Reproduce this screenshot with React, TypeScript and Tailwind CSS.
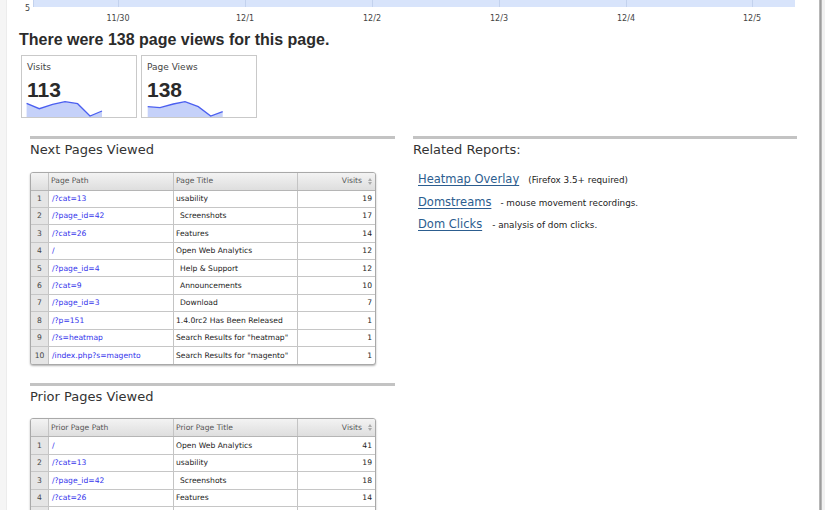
const nextRows = [
  ["/?cat=13", "usability", 19, false],
  ["/?page_id=42", "Screenshots", 17, true],
  ["/?cat=26", "Features", 14, false],
  ["/", "Open Web Analytics", 12, false],
  ["/?page_id=4", "Help & Support", 12, true],
  ["/?cat=9", "Announcements", 10, true],
  ["/?page_id=3", "Download", 7, true],
  ["/?p=151", "1.4.0rc2 Has Been Released", 1, false],
  ["/?s=heatmap", 'Search Results for "heatmap"', 1, false],
  ["/index.php?s=magento", 'Search Results for "magento"', 1, false],
] as const;

const priorRows = [
  ["/", "Open Web Analytics", 41, false],
  ["/?cat=13", "usability", 19, false],
  ["/?page_id=42", "Screenshots", 18, true],
  ["/?cat=26", "Features", 14, false],
  ["", "", "", false],
] as const;

const sans = { fontFamily: '"DejaVu Sans", sans-serif' };

function TopChart() {
  const ticks = [
    { x: 118, label: "11/30" },
    { x: 245, label: "12/1" },
    { x: 372, label: "12/2" },
    { x: 499, label: "12/3" },
    { x: 626, label: "12/4" },
    { x: 752, label: "12/5" },
  ];
  return (
    <svg width="812" height="24" viewBox="7 0 812 24" className="block">
      <rect x="33" y="0" width="762" height="7" fill="#d8e4fb" />
      <line x1="33.5" y1="0" x2="33.5" y2="7" stroke="#c3d2ee" />
      {ticks.map((t) => (
        <line key={t.label} x1={t.x + 0.5} y1="0" x2={t.x + 0.5} y2="7" stroke="#c3d2ee" />
      ))}
      <text x="25" y="10.5" fontSize="8" fill="#444" fontFamily="DejaVu Sans">
        5
      </text>
      {ticks.map((t) => (
        <text
          key={t.label}
          x={t.x}
          y="21"
          fontSize="8"
          fill="#444"
          textAnchor="middle"
          fontFamily="DejaVu Sans"
        >
          {t.label}
        </text>
      ))}
    </svg>
  );
}

function Sparkline({ pts }: { pts: number[][] }) {
  const line = pts.map((p, i) => `${i ? "L" : "M"}${p[0]},${p[1]}`).join(" ");
  const area = `M${pts[0][0]},16 ${pts.map((p) => `L${p[0]},${p[1]}`).join(" ")} L${pts[pts.length - 1][0]},16 Z`;
  return (
    <svg width="114" height="16" className="block overflow-visible">
      <path d={area} fill="#c5d1f9" />
      <path d={line} fill="none" stroke="#4b5ff0" strokeWidth="1.3" />
    </svg>
  );
}

function StatCard({ label, value, pts }: { label: string; value: string; pts: number[][] }) {
  return (
    <div className="w-[116px] border border-[#c9c9c9] pt-[6px] bg-white">
      <div className="pl-[5px] text-[9px] leading-[11px] text-[#444]" style={sans}>
        {label}
      </div>
      <div
        className="mt-[6px] pl-[5px] text-[21px] leading-[22px] font-bold text-[#2a2a2a]"
        style={{ fontFamily: '"Liberation Sans", Arial, sans-serif' }}
      >
        {value}
      </div>
      <Sparkline pts={pts} />
    </div>
  );
}

function SortIcon() {
  return (
    <svg width="4" height="7" className="ml-[6px]">
      <path d="M0,3 L2,0 L4,3 Z" fill="#aaa" />
      <path d="M0,4 L2,7 L4,4 Z" fill="#aaa" />
    </svg>
  );
}

function DataTable({
  pathLabel,
  titleLabel,
  rows,
}: {
  pathLabel: string;
  titleLabel: string;
  rows: readonly (readonly [string, string, number | string, boolean])[];
}) {
  return (
    <div
      className="w-[346px] rounded-[3px] border border-[#a9a9a9] bg-white shadow-[0_1px_2px_rgba(0,0,0,0.3)] overflow-hidden text-[7.6px]"
      style={sans}
    >
      <div className="flex h-[18px] border-b border-[#b5b5b5] bg-gradient-to-b from-[#f3f3f3] to-[#dedede] text-[#555]">
        <div className="w-[18px] border-r border-[#c4c4c4]" />
        <div className="w-[125px] border-r border-[#c4c4c4] pl-[2px] flex items-center">{pathLabel}</div>
        <div className="w-[124px] border-r border-[#c4c4c4] pl-[2px] flex items-center">{titleLabel}</div>
        <div className="flex-1 flex items-center justify-end pr-[3px]">
          Visits
          <SortIcon />
        </div>
      </div>
      {rows.map((r, i) => (
        <div
          key={i}
          className={`flex h-[17.4px] ${i < rows.length - 1 ? "border-b border-[#c6c6c6]" : ""}`}
        >
          <div className="w-[18px] border-r border-[#c4c4c4] bg-[#e5e5e5] text-[#444] flex items-center justify-center">
            {r[0] === "" ? "" : i + 1}
          </div>
          <div className="w-[125px] border-r border-[#c4c4c4] pl-[3px] flex items-center text-[#3434ec] whitespace-nowrap">
            {r[0]}
          </div>
          <div
            className={`w-[124px] border-r border-[#c4c4c4] flex items-center text-[#222] whitespace-nowrap ${
              r[3] ? "pl-[6px]" : "pl-[2px]"
            }`}
          >
            {r[1]}
          </div>
          <div className="flex-1 flex items-center justify-end pr-[3px] text-[#222]">{r[2]}</div>
        </div>
      ))}
    </div>
  );
}

function SectionTitle({ children }: { children: React.ReactNode }) {
  return (
    <>
      <div className="h-[3px] bg-[#c3c3c3]" />
      <div className="mt-[3px] text-[13px] leading-[16px] text-[#333]" style={sans}>
        {children}
      </div>
    </>
  );
}

function RelatedLink({ name, note, noteGap }: { name: string; note: string; noteGap: string }) {
  return (
    <div className="flex items-baseline h-[22.5px] pl-[5px]">
      <span className="text-[11.5px] leading-[22.5px] text-[#2c5d8f] underline underline-offset-2">{name}</span>
      <span className={`${noteGap} text-[8.8px] text-[#222]`}>{note}</span>
    </div>
  );
}

export default function App() {
  return (
    <div className="flex w-[825px] h-[510px] overflow-hidden bg-white">
      {/* left gutter */}
      <div className="w-[7px] shrink-0 bg-[#f5f5f5] border-r border-[#ececec]" />

      {/* page content */}
      <div className="w-[812px] shrink-0">
        <TopChart />

        <h1
          className="mt-[7px] pl-[12px] text-[16px] leading-[18px] font-bold text-[#2b2b2b]"
          style={{ fontFamily: '"Liberation Sans", Arial, sans-serif' }}
        >
          There were 138 page views for this page.
        </h1>

        <div className="mt-[6px] ml-[14px] flex gap-[4px]">
          <StatCard
            label="Visits"
            value="113"
            pts={[
              [4.6, 2.3],
              [17.3, 7.7],
              [30.6, 3.3],
              [43, 0.7],
              [55.6, 2.7],
              [68, 15],
              [80, 10],
            ]}
          />
          <StatCard
            label="Page Views"
            value="138"
            pts={[
              [5.7, 5.7],
              [18, 6.7],
              [31.3, 3],
              [43, 0.7],
              [56.3, 5.7],
              [68.7, 15],
              [80.7, 10.7],
            ]}
          />
        </div>

        <div className="mt-[18px] ml-[23px] flex gap-[18px]">
          {/* left column */}
          <div className="w-[365px]">
            <SectionTitle>Next Pages Viewed</SectionTitle>
            <div className="mt-[13.5px]">
              <DataTable pathLabel="Page Path" titleLabel="Page Title" rows={nextRows} />
            </div>

            <div className="mt-[17.5px]">
              <SectionTitle>Prior Pages Viewed</SectionTitle>
            </div>
            <div className="mt-[13.5px]">
              <DataTable pathLabel="Prior Page Path" titleLabel="Prior Page Title" rows={priorRows} />
            </div>
          </div>

          {/* right column */}
          <div className="w-[384px]" style={sans}>
            <SectionTitle>Related Reports:</SectionTitle>
            <div className="mt-[10px]">
              <RelatedLink name="Heatmap Overlay" note="(Firefox 3.5+ required)" noteGap="ml-[9px]" />
              <RelatedLink name="Domstreams" note="- mouse movement recordings." noteGap="ml-[9px]" />
              <RelatedLink name="Dom Clicks" note="- analysis of dom clicks." noteGap="ml-[10px]" />
            </div>
          </div>
        </div>
      </div>

      {/* right window edge */}
      <div className="w-[3px] shrink-0 bg-gradient-to-r from-[#c4c4c4] via-[#9d9d9d] to-[#c4c4c4]" />
      <div className="flex-1 bg-[#f1f1f1]" />
    </div>
  );
}
